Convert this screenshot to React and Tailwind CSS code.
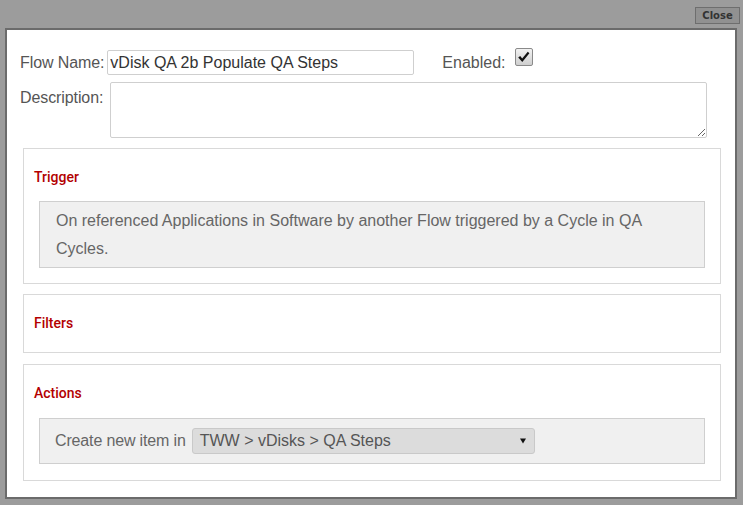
import React from "react";

const sans = { fontFamily: '"Liberation Sans", Arial, sans-serif' };

function Title({ children }) {
  return (
    <div
      className="text-[14px] leading-[20px] font-medium text-[#b30000]"
      style={{ fontFamily: 'Roboto, "Noto Sans", sans-serif' }}
    >
      {children}
    </div>
  );
}

export default function App() {
  return (
    <div className="w-[743px] h-[505px] bg-[#9c9c9c] overflow-hidden" style={sans}>
      <div className="h-[28px] flex justify-end items-start pt-[7px] pr-[3px]">
        <button
          className="w-[45px] h-[17px] border border-[#6e6e6e] bg-[#919191] text-[#333] text-[10px] font-bold leading-[15px] flex items-center justify-center"
          style={{ fontFamily: '"DejaVu Sans", sans-serif' }}
        >
          Close
        </button>
      </div>
      <div className="ml-[5px] w-[732px] h-[471px] border-2 border-[#6b6b6b] bg-white flex flex-col">
        <div className="mt-[20px] flex items-center h-[25px] pl-[13px] text-[16px] text-[#555]">
          <span className="tracking-[-0.1px]">Flow Name:</span>
          <input
            readOnly
            defaultValue="vDisk QA 2b Populate QA Steps"
            className="ml-[3px] w-[307px] h-[25px] border border-[#cfcfcf] rounded-[2px] pl-[2px] text-[16px] text-[#333] outline-none"
            style={sans}
          />
          <span className="ml-[28px]">Enabled:</span>
          <div className="ml-[9px] self-start -mt-[2px] w-[18px] h-[18px] rounded-[2px] border border-[#8a8a8a] bg-gradient-to-b from-[#f2f2f2] to-[#cfcfcf] flex items-center justify-center">
            <svg width="13" height="12" viewBox="0 0 13 12">
              <path d="M1.2 6.6 L3.2 5 L5.2 7.6 L10.8 0.8 L12.4 2.2 L5.3 11 Z" fill="#111" />
            </svg>
          </div>
        </div>
        <div className="mt-[7px] flex items-start pl-[13px] text-[16px] text-[#555]">
          <span className="mt-[4px] tracking-[-0.1px]">Description:</span>
          <textarea
            readOnly
            defaultValue=""
            className="ml-[7px] w-[597px] h-[56px] border border-[#cfcfcf] rounded-[2px] outline-none"
          />
        </div>

        <div className="mt-[10px] ml-[16px] mr-[14px] border border-[#d9d9d9] pt-[18px] pb-[15px] px-[10px]">
          <Title>Trigger</Title>
          <div className="mt-[14px] mx-[5px] border border-[#cfcfcf] bg-[#f0f0f0] pt-[5px] pb-[4px] pl-[16px] pr-[20px] text-[16px] leading-[28px] text-[#666]">
            On referenced Applications in Software by another Flow triggered by a Cycle in QA Cycles.
          </div>
        </div>

        <div className="mt-[10px] ml-[16px] mr-[14px] border border-[#d9d9d9] pt-[18px] pb-[19px] px-[10px]">
          <Title>Filters</Title>
        </div>

        <div className="mt-[11px] ml-[16px] mr-[14px] border border-[#d9d9d9] pt-[18px] pb-[16px] px-[10px]">
          <Title>Actions</Title>
          <div className="mt-[15px] mx-[5px] h-[46px] border border-[#cfcfcf] bg-[#f0f0f0] pl-[15px] flex items-center text-[16px] text-[#666]">
            <span className="tracking-[-0.15px]">Create new item in</span>
            <div className="ml-[6px] w-[343px] h-[26px] rounded-[3px] border border-[#c9c9c9] bg-[#dcdcdc] flex items-center justify-between pl-[7px] pr-[8px] text-[#555]">
              <span>TWW &gt; vDisks &gt; QA Steps</span>
              <svg width="6" height="6" viewBox="0 0 6 6">
                <path d="M0 0.5 H6 L3 5.5 Z" fill="#111" />
              </svg>
            </div>
          </div>
        </div>
      </div>
    </div>
  );
}
